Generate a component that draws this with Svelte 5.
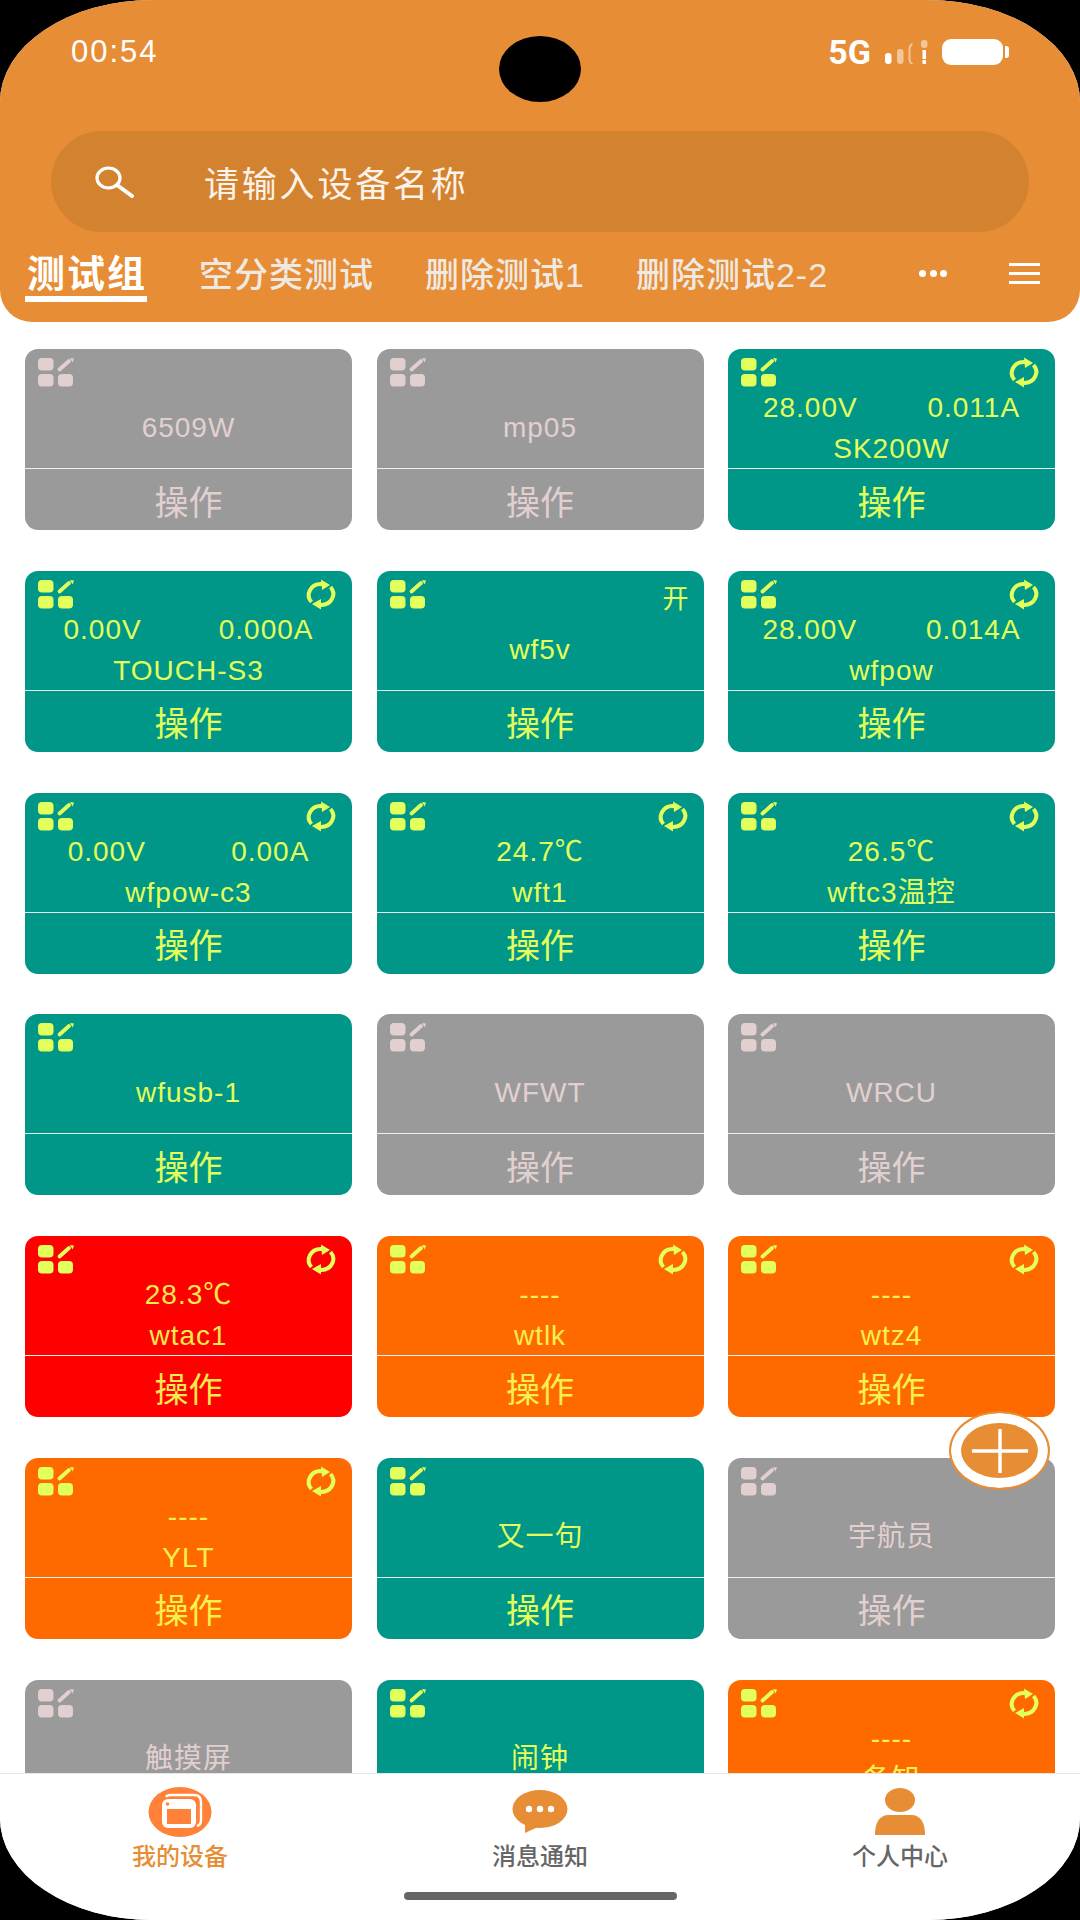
<script>
	const G = "off"
	const T = "on"
	const R = "hot"
	const O = "warn"

	const devices = [
		{ name: "6509W", state: G },
		{ name: "mp05", state: G },
		{ name: "SK200W", state: T, sync: true, volts: "28.00V", amps: "0.011A" },
		{ name: "TOUCH-S3", state: T, sync: true, volts: "0.00V", amps: "0.000A" },
		{ name: "wf5v", state: T, flag: "开" },
		{ name: "wfpow", state: T, sync: true, volts: "28.00V", amps: "0.014A" },
		{ name: "wfpow-c3", state: T, sync: true, volts: "0.00V", amps: "0.00A" },
		{ name: "wft1", state: T, sync: true, reading: "24.7℃" },
		{ name: "wftc3温控", state: T, sync: true, reading: "26.5℃" },
		{ name: "wfusb-1", state: T },
		{ name: "WFWT", state: G },
		{ name: "WRCU", state: G },
		{ name: "wtac1", state: R, sync: true, reading: "28.3℃" },
		{ name: "wtlk", state: O, sync: true, reading: "----" },
		{ name: "wtz4", state: O, sync: true, reading: "----" },
		{ name: "YLT", state: O, sync: true, reading: "----" },
		{ name: "又一句", state: T },
		{ name: "宇航员", state: G },
		{ name: "触摸屏", state: G },
		{ name: "闹钟", state: T },
		{ name: "备知", state: O, sync: true, reading: "----" },
	]

	const tabs = ["空分类测试", "删除测试1", "删除测试2-2"]
</script>

<div class="phone">
	<header class="header">
		<div class="status">
			<span class="time">00:54</span>
			<div class="status-right">
				<span class="net">5G</span>
				<svg width="43" height="24" viewBox="0 0 43 24">
					<rect x="0" y="13" width="6.5" height="11" rx="3" fill="#fff" />
					<rect x="12" y="9" width="6.5" height="15" rx="3" fill="#fff" opacity=".5" />
					<path d="M27.5 4 C25 5 24.5 7 24.5 10 V19 C24.5 21 25 23 27.5 24" stroke="#fff" stroke-width="2" fill="none" opacity=".5" />
					<rect x="36" y="0" width="6.5" height="8" rx="3" fill="#fff" opacity=".5" />
					<rect x="37.5" y="10" width="3.5" height="9" fill="#fff" />
					<rect x="37.5" y="20" width="3.5" height="4" fill="#fff" />
				</svg>
				<div class="battery"><div class="cell"></div><div class="tip"></div></div>
			</div>
		</div>
		<div class="search">
			<svg width="39" height="32" viewBox="0 0 39 32" fill="none" stroke="#fff">
				<ellipse cx="13.5" cy="12" rx="11.5" ry="10" stroke-width="3.2" />
				<path d="M22 19 L37 30" stroke-width="4" stroke-linecap="round" />
			</svg>
			<span>请输入设备名称</span>
		</div>
		<nav class="tabs">
			<span class="tab active">测试组</span>
			{#each tabs as tab}
				<span class="tab">{tab}</span>
			{/each}
			<span class="more"><i></i><i></i><i></i></span>
			<span class="menu"><i></i><i></i><i></i></span>
		</nav>
	</header>

	<main class="list">
		<div class="grid">
			{#each devices as d}
				<div class="card {d.state}">
					<div class="body">
						<div class="head">
							<svg class="edit" width="36" height="29" viewBox="0 0 36 29" fill="currentColor">
								<rect x="0" y="0" width="15.5" height="12.5" rx="4" />
								<rect x="0" y="16" width="15.5" height="12.5" rx="4" />
								<rect x="20" y="16" width="15" height="12.5" rx="4" />
								<path d="M21.5 11.5 L31 3" stroke="currentColor" stroke-width="3.8" stroke-linecap="round" />
								<path d="M32 0 L36 0.4 L34.6 4.6 Z" />
							</svg>
							{#if d.sync}
								<svg class="sync" width="32" height="29" viewBox="0 0 32 29" fill="none" stroke="currentColor" stroke-width="4">
									<path d="M6.5 22 A12 11 0 0 1 16 4 H18" />
									<path d="M25.5 7 A12 11 0 0 1 16 25 H14" />
									<path d="M16 -0.5 L25 5 L17 10 Z" fill="currentColor" stroke="none" />
									<path d="M16 19 L7 24 L16 29.5 Z" fill="currentColor" stroke="none" />
								</svg>
							{/if}
							{#if d.flag}
								<span class="flag">{d.flag}</span>
							{/if}
						</div>
						<div class="info">
							{#if d.volts}
								<div class="line pair"><span>{d.volts}</span><span>{d.amps}</span></div>
							{:else if d.reading}
								<div class="line">{d.reading}</div>
							{/if}
							<div class="line">{d.name}</div>
						</div>
					</div>
					<div class="action">操作</div>
				</div>
			{/each}
		</div>
	</main>

	<button class="fab" aria-label="添加">
		<svg width="56" height="44" viewBox="0 0 56 44" stroke="#fff" stroke-width="3.4">
			<path d="M0 22 H56 M28 0 V44" />
		</svg>
	</button>

	<footer class="nav">
		<div class="nav-item active">
			<svg width="64" height="50" viewBox="0 0 64 50">
				<ellipse cx="32" cy="25" rx="31.5" ry="25" fill="#FF8238" />
				<path d="M18 10 Q19 8 23 8 H46 Q53 8 53 15 V33 Q53 38 49 39" fill="none" stroke="#fff" stroke-width="2.4" />
				<rect x="14" y="12" width="34" height="29" rx="6" fill="#fff" />
				<rect x="19" y="22" width="24" height="15" fill="#FF8238" />
				<circle cx="19.5" cy="17" r="1.8" fill="#FF8238" />
			</svg>
			<span>我的设备</span>
		</div>
		<div class="nav-item">
			<svg width="58" height="50" viewBox="0 0 58 50">
				<ellipse cx="29" cy="22" rx="27.5" ry="19" fill="#E68D35" />
				<path d="M14 34 L14 46 L27 40 Z" fill="#E68D35" />
				<circle cx="18" cy="22" r="3.2" fill="#fff" />
				<circle cx="29" cy="22" r="3.2" fill="#fff" />
				<circle cx="40" cy="22" r="3.2" fill="#fff" />
			</svg>
			<span>消息通知</span>
		</div>
		<div class="nav-item">
			<svg width="50" height="50" viewBox="0 0 50 50" fill="#E68D35">
				<ellipse cx="25" cy="13" rx="15" ry="12" />
				<path d="M0 48 C0 36 4 28 14 28 H36 C46 28 50 36 50 48 Z" />
			</svg>
			<span>个人中心</span>
		</div>
		<div class="home-bar"></div>
	</footer>
</div>

<style>
	:global(body) {
		background: #000;
	}

	.phone {
		position: relative;
		width: 1080px;
		height: 1920px;
		display: flex;
		flex-direction: column;
		overflow: hidden;
		background: #fff;
		border-radius: 152px / 102px;
		font-family: "Liberation Sans", "Noto Sans CJK SC", sans-serif;
	}

	.header {
		height: 322px;
		flex: none;
		box-sizing: border-box;
		background: #e68d35;
		border-radius: 0 0 32px 32px;
		color: #fff;
		padding: 30px 0 0;
	}

	.status {
		display: flex;
		justify-content: space-between;
		align-items: center;
		height: 44px;
		padding: 0 71px 0 71px;
	}

	.status::after {
		content: "";
		position: absolute;
		left: 499px;
		top: 36px;
		width: 82px;
		height: 66px;
		border-radius: 50%;
		background: #000;
	}

	.time {
		font-size: 31px;
		letter-spacing: 2px;
	}

	.status-right {
		display: flex;
		align-items: center;
		gap: 14px;
	}

	.net {
		font-size: 34px;
		font-weight: 700;
		font-family: Roboto, "Liberation Sans", sans-serif;
	}

	.battery {
		display: flex;
		align-items: center;
		gap: 2px;
	}

	.cell {
		width: 61px;
		height: 26px;
		border-radius: 9px;
		background: #fff;
	}

	.tip {
		width: 4px;
		height: 12px;
		border-radius: 0 3px 3px 0;
		background: #fff;
	}

	.search {
		display: flex;
		align-items: center;
		height: 101px;
		margin: 57px 51px 0;
		padding-left: 44px;
		border-radius: 51px;
		background: #d38330;
		font-size: 35px;
		letter-spacing: 2.8px;
	}

	.search span {
		margin-left: 70px;
		color: #fbf3ea;
	}

	.tabs {
		position: relative;
		display: flex;
		align-items: baseline;
		margin-top: 18px;
		padding-left: 27px;
		gap: 51px;
		color: #efe9e2;
	}

	.tab {
		font-size: 34px;
		letter-spacing: 1px;
		font-weight: 500;
		line-height: 48px;
		white-space: nowrap;
	}

	.tab.active {
		position: relative;
		font-size: 38px;
		letter-spacing: 2px;
		font-weight: 700;
		color: #fff;
		margin-right: 1px;
	}

	.tab.active::after {
		content: "";
		position: absolute;
		left: -2px;
		right: 0;
		bottom: -4px;
		height: 6px;
		background: #fff;
	}

	.more {
		position: absolute;
		left: 919px;
		top: 20px;
		display: flex;
		gap: 3.5px;
	}

	.more i {
		width: 7px;
		height: 7px;
		border-radius: 50%;
		background: #fff;
	}

	.menu {
		position: absolute;
		left: 1009px;
		top: 13px;
		display: flex;
		flex-direction: column;
		gap: 6px;
	}

	.menu i {
		width: 31px;
		height: 3px;
		background: #fff;
	}

	.list {
		flex: 1;
		min-height: 0;
		overflow: hidden;
		padding: 27px 25px 0;
	}

	.grid {
		display: grid;
		grid-template-columns: repeat(3, 327px);
		column-gap: 24.5px;
		row-gap: 40.8px;
	}

	.card {
		height: 181px;
		border-radius: 13px;
		overflow: hidden;
		color: #e3ff5b;
	}

	.card.on {
		background: #009688;
	}

	.card.off {
		background: #9a9a9a;
		color: #e2d0d0;
	}

	.card.hot {
		background: #ff0000;
		color: #f7e94e;
	}

	.card.warn {
		background: #ff6a00;
		color: #f7f04e;
	}

	.body {
		display: flex;
		flex-direction: column;
		height: 119px;
		border-bottom: 1px solid #e9f3ef;
	}

	.head {
		display: flex;
		justify-content: space-between;
		align-items: flex-start;
		height: 38px;
		flex: none;
		padding: 9px 15px 0 13px;
		box-sizing: border-box;
	}

	.card.hot .edit,
	.card.warn .edit,
	.card.hot .sync,
	.card.warn .sync {
		color: #e3ff5b;
	}

	.edit,
	.sync {
		flex: none;
		overflow: visible;
	}

	.flag {
		font-size: 26px;
		line-height: 38px;
	}

	.info {
		flex: 1;
		display: flex;
		flex-direction: column;
		justify-content: center;
		align-items: stretch;
		text-align: center;
		font-size: 28px;
		letter-spacing: 1px;
	}

	.line {
		line-height: 41px;
	}

	.pair {
		display: flex;
		justify-content: space-around;
	}

	.action {
		height: 61px;
		display: flex;
		align-items: center;
		justify-content: center;
		font-size: 34px;
		padding-top: 1px;
		box-sizing: border-box;
	}

	.fab {
		position: absolute;
		left: 949px;
		top: 1411px;
		width: 101px;
		height: 79px;
		padding: 0;
		box-sizing: border-box;
		display: flex;
		align-items: center;
		justify-content: center;
		border-radius: 50%;
		border: 2px solid #e68d35;
		background: #e68d35;
		box-shadow: inset 0 0 0 10px #fff;
	}

	.nav {
		position: relative;
		display: flex;
		flex: none;
		box-sizing: border-box;
		height: 147px;
		padding: 13px 0 0;
		background: #fff;
		border-top: 1px solid #e6e6e6;
	}

	.nav-item {
		flex: 1;
		display: flex;
		flex-direction: column;
		align-items: center;
		gap: 6px;
		font-size: 24px;
		line-height: 28px;
		font-weight: 500;
		color: #666;
	}

	.nav-item.active {
		color: #e68d35;
	}

	.home-bar {
		position: absolute;
		left: 404px;
		bottom: 20px;
		width: 273px;
		height: 8px;
		border-radius: 4px;
		background: #666;
	}
</style>
